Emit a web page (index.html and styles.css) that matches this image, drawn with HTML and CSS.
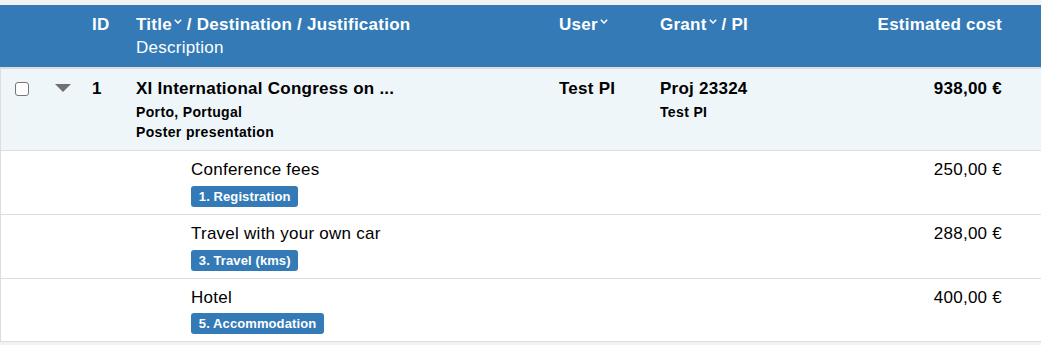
FILE: index.html
```html
<!DOCTYPE html>
<html lang="en">
<head>
<meta charset="utf-8">
<title>Trips</title>
<link rel="stylesheet" href="styles.css">
</head>
<body>
<div class="page">
  <table class="grid">
    <colgroup>
      <col class="w-check"><col class="w-toggle"><col class="w-id"><col class="w-title"><col class="w-user"><col class="w-grant"><col class="w-cost"><col class="w-rest">
    </colgroup>
    <thead>
      <tr>
        <th></th>
        <th></th>
        <th>ID</th>
        <th>Title<svg class="sort" width="8" height="5" viewBox="0 0 8 5"><polyline points="0.8,0.8 4,4 7.2,0.8" /></svg> / Destination / Justification<br><span class="sub-head">Description</span></th>
        <th>User<svg class="sort" width="8" height="5" viewBox="0 0 8 5"><polyline points="0.8,0.8 4,4 7.2,0.8" /></svg></th>
        <th>Grant<svg class="sort" width="8" height="5" viewBox="0 0 8 5"><polyline points="0.8,0.8 4,4 7.2,0.8" /></svg> / PI</th>
        <th class="num">Estimated cost</th>
        <th></th>
      </tr>
    </thead>
    <tbody>
      <tr class="main-row">
        <td class="c-check"><span class="checkbox"></span></td>
        <td class="c-toggle"><span class="caret"></span></td>
        <td class="strong">1</td>
        <td>
          <div class="strong first">XI International Congress on ...</div>
          <div class="small strong">Porto, Portugal</div>
          <div class="small strong">Poster presentation</div>
        </td>
        <td class="strong">Test PI</td>
        <td>
          <div class="strong first">Proj 23324</div>
          <div class="small strong">Test PI</div>
        </td>
        <td class="num strong">938,00 €</td>
        <td></td>
      </tr>
      <tr class="item-row">
        <td></td><td></td><td></td>
        <td class="indent">
          <div>Conference fees</div>
          <div class="label-wrap"><span class="label">1. Registration</span></div>
        </td>
        <td></td><td></td>
        <td class="num">250,00 €</td>
        <td></td>
      </tr>
      <tr class="item-row">
        <td></td><td></td><td></td>
        <td class="indent">
          <div>Travel with your own car</div>
          <div class="label-wrap"><span class="label">3. Travel (kms)</span></div>
        </td>
        <td></td><td></td>
        <td class="num">288,00 €</td>
        <td></td>
      </tr>
      <tr class="item-row last">
        <td></td><td></td><td></td>
        <td class="indent">
          <div>Hotel</div>
          <div class="label-wrap"><span class="label">5. Accommodation</span></div>
        </td>
        <td></td><td></td>
        <td class="num">400,00 €</td>
        <td></td>
      </tr>
    </tbody>
  </table>
</div>
</body>
</html>
```

FILE: styles.css
```css
html, body {
  margin: 0;
  padding: 0;
}

body {
  background: #f2f2f2;
  font-family: "Liberation Sans", Arial, sans-serif;
  font-size: 17px;
  letter-spacing: 0.25px;
  line-height: 22.86px;
  color: #000;
}

.page {
  padding-top: 5px;
  width: 1041px;
  overflow: hidden;
}

.grid {
  width: 1041px;
  border-collapse: separate;
  border-spacing: 0;
  table-layout: fixed;
}

.w-check { width: 45px; }
.w-toggle { width: 39px; }
.w-id { width: 44px; }
.w-title { width: 423px; }
.w-user { width: 101px; }
.w-grant { width: 200px; }
.w-cost { width: 158px; }
.w-rest { width: 31px; }

.grid th {
  background: #337ab7;
  color: #fff;
  font-weight: bold;
  text-align: left;
  vertical-align: top;
  padding: 8px 8px 8px;
  line-height: 23px;
  border-bottom: 2px solid #dddddd;
}

.grid th .sub-head {
  font-weight: normal;
}

.sort {
  margin-left: 2px;
  vertical-align: 6px;
  fill: none;
  stroke: #fff;
  stroke-width: 1.5;
}

.grid td {
  padding: 8px;
  vertical-align: top;
  background: #fff;
}

.grid td:first-child {
  border-left: 1px solid #dddddd;
}

.main-row td {
  background: #eff6fa;
  padding-top: 9px;
}

.item-row td {
  border-top: 1px solid #dddddd;
  padding-bottom: 7px;
}

.item-row.last td {
  border-bottom: 1px solid #dddddd;
}

.num {
  text-align: right;
}

.grid th.num {
  text-align: right;
}

.strong {
  font-weight: bold;
}

.first {
  margin-bottom: 1px;
}

.small {
  font-size: 14px;
  letter-spacing: 0.35px;
  line-height: 20px;
}

.c-check {
  padding-left: 14px !important;
}

.checkbox {
  display: block;
  width: 12px;
  height: 12px;
  margin-top: 4px;
  border: 1px solid #767676;
  border-radius: 3px;
  background: #fff;
}

.c-toggle {
  padding-left: 10px !important;
}

.caret {
  display: block;
  width: 0;
  height: 0;
  margin-top: 6px;
  border-left: 8.5px solid transparent;
  border-right: 8.5px solid transparent;
  border-top: 8px solid #707070;
}

.indent {
  padding-left: 63px !important;
}

.label-wrap {
  display: flex;
  margin-top: 4px;
}

.label {
  display: inline-block;
  background: #337ab7;
  color: #fff;
  font-size: 13px;
  letter-spacing: 0.1px;
  font-weight: bold;
  line-height: 15px;
  padding: 3px 7.8px 3px;
  border-radius: 3px;
}
```
